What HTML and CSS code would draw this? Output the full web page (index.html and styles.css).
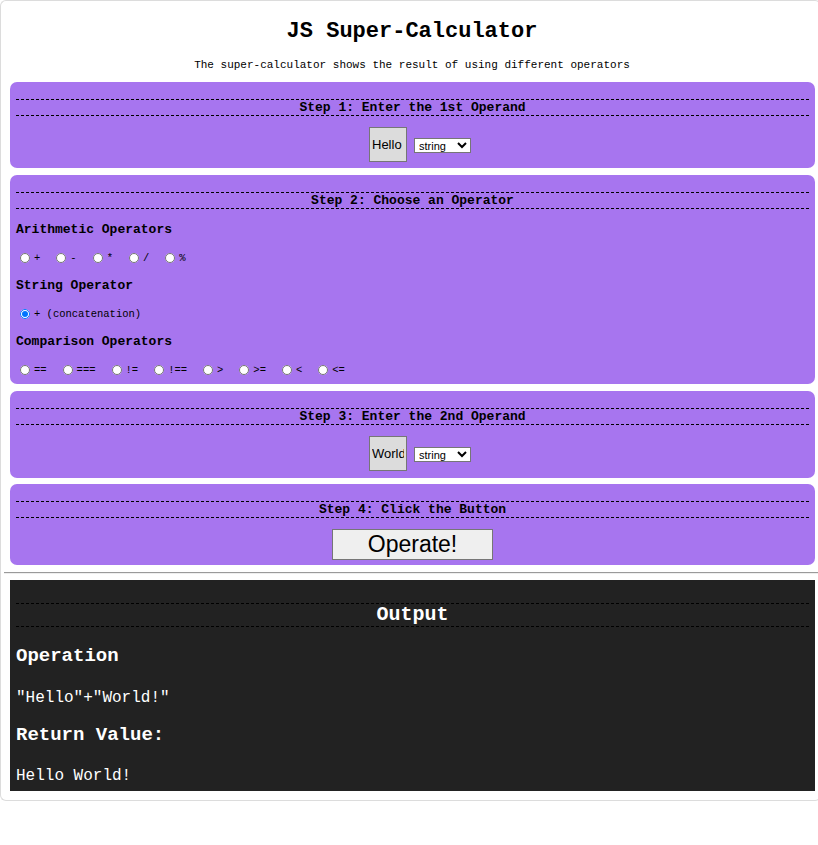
FILE: index.html
```html
<!DOCTYPE html>
<html>
<head>
<meta charset="utf-8">
<title>JS Super-Calculator</title>
<link rel="stylesheet" href="styles.css">
</head>
<body>
<div class="wrapper">
  <h1 class="title">JS Super-Calculator</h1>
  <p class="subtitle">The super-calculator shows the result of using different operators</p>

  <section class="step step-first">
    <h3 class="step-head">Step 1: Enter the 1st Operand</h3>
    <div class="operand-row">
      <input class="operand" type="text" value="Hello">
      <select class="type-select"><option>string</option><option>number</option><option>boolean</option></select>
    </div>
  </section>

  <section class="step">
    <h3 class="step-head">Step 2: Choose an Operator</h3>
    <h4 class="group-title">Arithmetic Operators</h4>
    <div class="radio-row">
      <label class="opt"><input type="radio" name="op"><span>+</span></label>
      <label class="opt"><input type="radio" name="op"><span>-</span></label>
      <label class="opt"><input type="radio" name="op"><span>*</span></label>
      <label class="opt"><input type="radio" name="op"><span>/</span></label>
      <label class="opt"><input type="radio" name="op"><span>%</span></label>
    </div>
    <h4 class="group-title">String Operator</h4>
    <div class="radio-row">
      <label class="opt"><input type="radio" name="op" checked><span>+ (concatenation)</span></label>
    </div>
    <h4 class="group-title">Comparison Operators</h4>
    <div class="radio-row">
      <label class="opt"><input type="radio" name="op"><span>==</span></label>
      <label class="opt"><input type="radio" name="op"><span>===</span></label>
      <label class="opt"><input type="radio" name="op"><span>!=</span></label>
      <label class="opt"><input type="radio" name="op"><span>!==</span></label>
      <label class="opt"><input type="radio" name="op"><span>&gt;</span></label>
      <label class="opt"><input type="radio" name="op"><span>&gt;=</span></label>
      <label class="opt"><input type="radio" name="op"><span>&lt;</span></label>
      <label class="opt"><input type="radio" name="op"><span>&lt;=</span></label>
    </div>
  </section>

  <section class="step">
    <h3 class="step-head">Step 3: Enter the 2nd Operand</h3>
    <div class="operand-row">
      <input class="operand" type="text" value="World">
      <select class="type-select"><option>string</option><option>number</option><option>boolean</option></select>
    </div>
  </section>

  <section class="step step-last">
    <h3 class="step-head">Step 4: Click the Button</h3>
    <div class="button-row">
      <button class="operate" type="button">Operate!</button>
    </div>
  </section>

  <hr class="divider">

  <section class="output">
    <h2 class="output-head">Output</h2>
    <h3 class="out-title">Operation</h3>
    <p class="out-text out-first">"Hello"+"World!"</p>
    <h3 class="out-title out-second">Return Value:</h3>
    <p class="out-text out-last">Hello World!</p>
  </section>
</div>
</body>
</html>
```

FILE: styles.css
```css
html, body {
  margin: 0;
  padding: 0;
  overflow: hidden;
  background: #fff;
}

body {
  font-family: "Liberation Mono", "Courier New", monospace;
  color: #000;
}

.wrapper {
  box-sizing: border-box;
  width: calc(100vw + 3px);
  border: 1px solid #dcdcdc;
  border-right-color: transparent;
  border-radius: 6px;
  padding: 0 0 9px 3px;
}

.title {
  margin: 18px 0 0;
  font-size: 22px;
  line-height: 26px;
  font-weight: bold;
  text-align: center;
}

.subtitle {
  margin: 14px 0 0;
  font-size: 11px;
  line-height: 13px;
  text-align: center;
}

.step {
  background: #a775ef;
  border-radius: 7px;
  margin: 7px 5px 0 6px;
  padding: 17px 6px 7px;
}

.step-first {
  margin-top: 10px;
  padding-bottom: 6px;
}

.step-last {
  margin-top: 6px;
  padding-bottom: 5px;
}

.step-head {
  margin: 0;
  border-top: 1px dashed #000;
  border-bottom: 1px dashed #000;
  font-size: 13px;
  line-height: 15px;
  font-weight: bold;
  text-align: center;
}

.operand-row {
  display: flex;
  justify-content: center;
  align-items: center;
  gap: 7px;
  margin-top: 11px;
  padding-left: 15px;
}

.operand {
  box-sizing: border-box;
  width: 38px;
  height: 35px;
  margin: 0;
  padding: 0 2px;
  border: 1px solid #767676;
  background: #dcdcdc;
  font-family: "Liberation Sans", Arial, sans-serif;
  font-size: 13px;
  color: #000;
}

.type-select {
  box-sizing: border-box;
  width: 57px;
  height: 15px;
  margin: 2px 0 0;
  padding: 0;
  font-family: "Liberation Sans", Arial, sans-serif;
  font-size: 11px;
  border: 1px solid #767676;
  background: #fff;
}

.group-title {
  margin: 13px 0 0;
  font-size: 13px;
  line-height: 15px;
  font-weight: bold;
}

.radio-row {
  display: flex;
  align-items: center;
  margin-top: 13px;
  height: 15px;
  font-size: 10.5px;
}

.opt {
  display: inline-flex;
  align-items: center;
  margin-right: 12px;
}

.opt input {
  width: 10px;
  height: 10px;
  margin: 0 4px 0 4px;
}

.button-row {
  display: flex;
  justify-content: center;
  margin-top: 11px;
}

.operate {
  box-sizing: border-box;
  width: 161px;
  height: 31px;
  padding: 0;
  border: 1px solid #767676;
  background: #efefef;
  font-family: "Liberation Sans", Arial, sans-serif;
  font-size: 23px;
  color: #000;
}

.divider {
  margin: 7px 0 6px;
  border: 0;
  border-top: 1px solid #9a9a9a;
  border-bottom: 1px solid #eeeeee;
  height: 0;
}

.output {
  background: #222;
  color: #fff;
  margin: 0 5px 0 6px;
  padding: 23px 6px 5px;
}

.output-head {
  margin: 0;
  border-top: 1px dashed #000;
  border-bottom: 1px dashed #000;
  font-size: 20px;
  line-height: 22px;
  font-weight: bold;
  text-align: center;
}

.out-title {
  margin: 18px 0 0;
  font-size: 19px;
  line-height: 22px;
  font-weight: bold;
}

.out-text {
  margin: 22px 0 0;
  font-size: 16px;
  line-height: 19px;
}

.out-second {
  margin-top: 16px;
}

.out-last {
  margin-top: 21px;
}
```
